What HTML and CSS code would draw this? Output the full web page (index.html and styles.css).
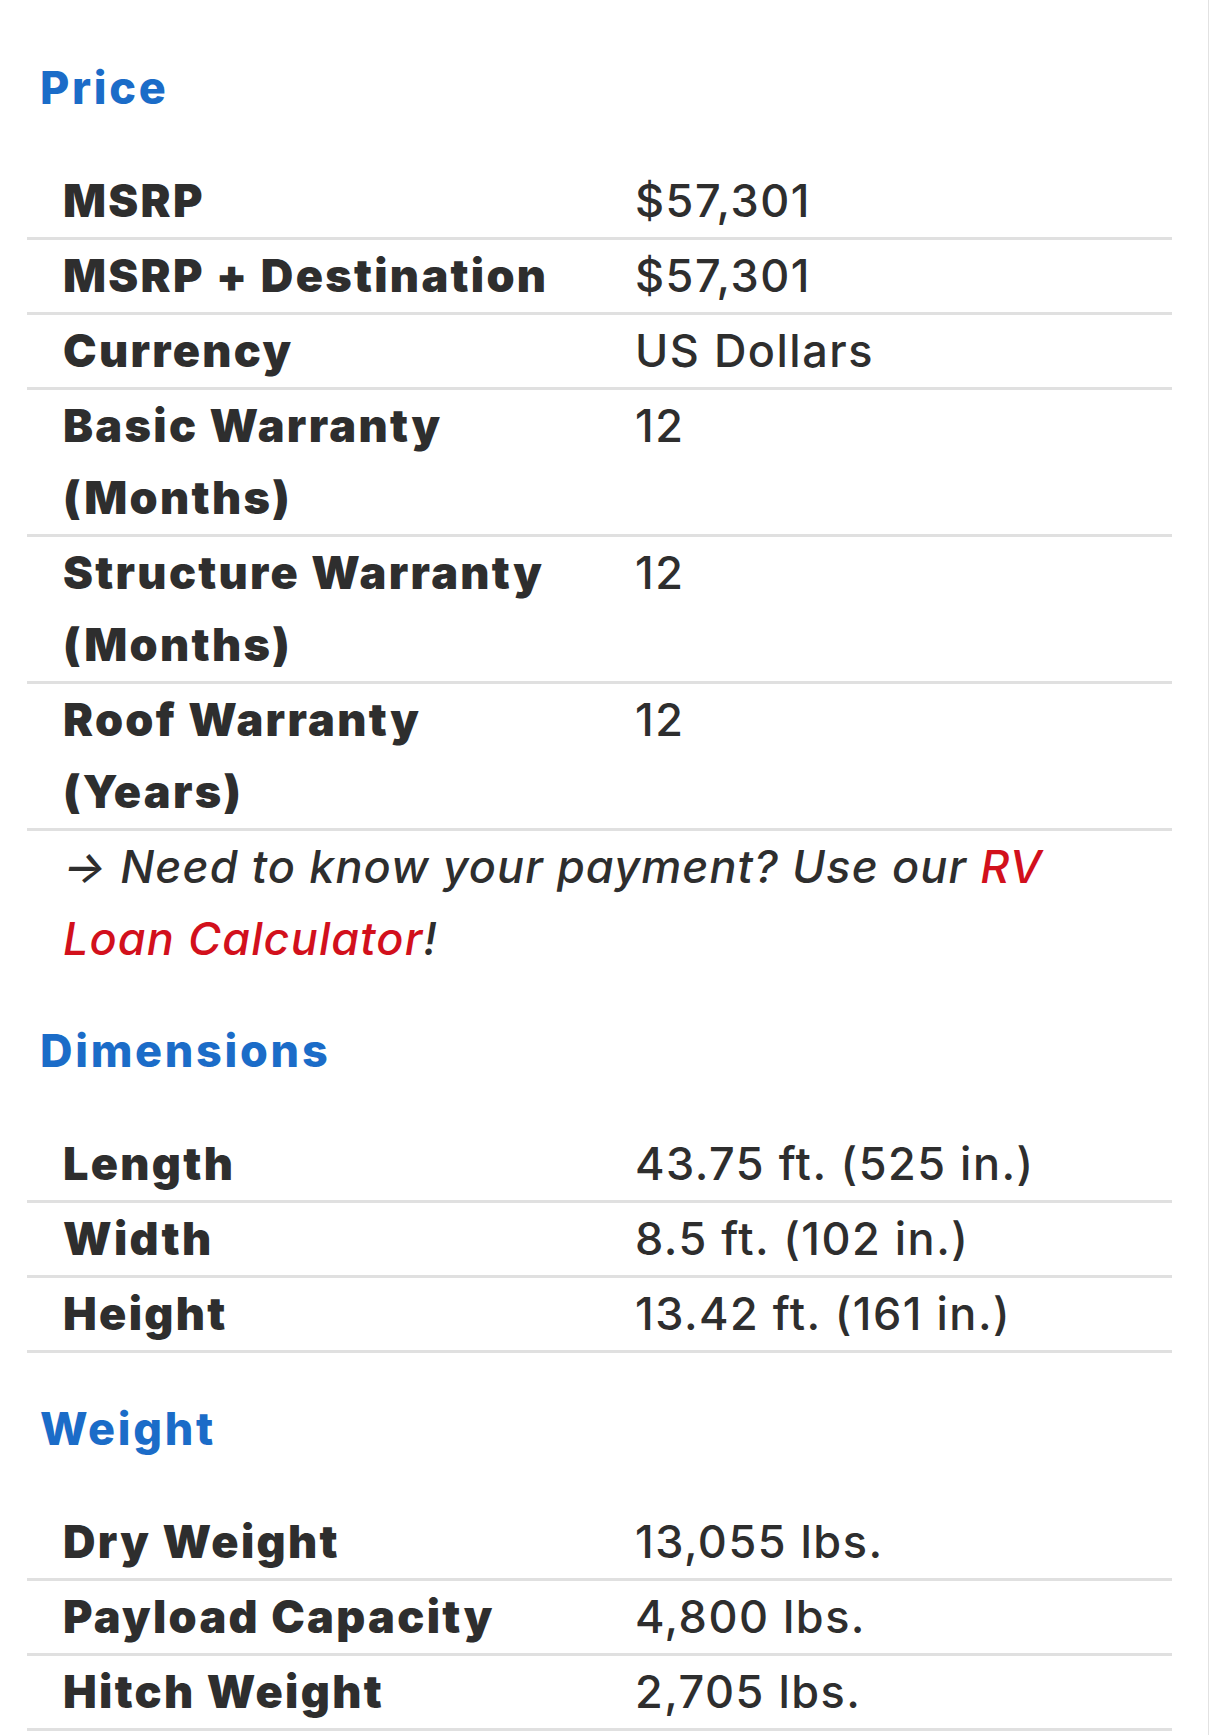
FILE: index.html
```html
<!DOCTYPE html>
<html lang="en">
<head>
<meta charset="utf-8">
<title>Specs</title>
<link rel="stylesheet" href="styles.css">
</head>
<body>
<div class="page">
  <section class="section">
    <h2 class="section-title">Price</h2>
    <table class="spec-table">
      <tr><td class="label">MSRP</td><td class="value">$57,301</td></tr>
      <tr><td class="label">MSRP + Destination</td><td class="value">$57,301</td></tr>
      <tr><td class="label">Currency</td><td class="value">US Dollars</td></tr>
      <tr><td class="label">Basic Warranty (Months)</td><td class="value">12</td></tr>
      <tr><td class="label">Structure Warranty (Months)</td><td class="value">12</td></tr>
      <tr><td class="label">Roof Warranty (Years)</td><td class="value">12</td></tr>
    </table>
    <p class="note">→ Need to know your payment? Use our <a class="note-link" href="#">RV Loan Calculator</a>!</p>
  </section>
  <section class="section">
    <h2 class="section-title">Dimensions</h2>
    <table class="spec-table">
      <tr><td class="label">Length</td><td class="value">43.75 ft. (525 in.)</td></tr>
      <tr><td class="label">Width</td><td class="value">8.5 ft. (102 in.)</td></tr>
      <tr><td class="label">Height</td><td class="value">13.42 ft. (161 in.)</td></tr>
    </table>
  </section>
  <section class="section">
    <h2 class="section-title">Weight</h2>
    <table class="spec-table">
      <tr><td class="label">Dry Weight</td><td class="value">13,055 lbs.</td></tr>
      <tr><td class="label">Payload Capacity</td><td class="value">4,800 lbs.</td></tr>
      <tr><td class="label">Hitch Weight</td><td class="value">2,705 lbs.</td></tr>
    </table>
  </section>
</div>
</body>
</html>
```
FILE: styles.css
```css
html, body {
  margin: 0;
  padding: 0;
  background: #ffffff;
}
body {
  font-family: Inter, "Noto Sans", "Liberation Sans", sans-serif;
  color: #2e2e2e;
}
.page {
  width: 1181px;
  min-height: 1735px;
  padding: 52px 0 0 27px;
  border-right: 1px solid #e2e2e2;
  box-sizing: content-box;
}
.section-title {
  margin: 40px 0 41px;
  padding-left: 13px;
  font-size: 45px;
  line-height: 72px;
  font-weight: 800;
  letter-spacing: 2.7px;
  color: #1b6cc8;
}
.section:first-child .section-title {
  margin-top: 0;
}
.spec-table {
  width: 1145px;
  border-collapse: collapse;
  table-layout: fixed;
}
.spec-table td {
  padding: 0 36px;
  font-size: 45px;
  line-height: 72px;
  vertical-align: top;
  border-bottom: 3px solid #e0e0e0;
}
.label {
  width: 500px;
  font-weight: 900;
  letter-spacing: 2.3px;
}
.value {
  font-weight: 500;
  letter-spacing: 1.5px;
}
.note {
  margin: 0;
  padding: 0 36px;
  width: 1073px;
  font-size: 45px;
  line-height: 72px;
  font-style: italic;
  font-weight: 500;
  letter-spacing: 1.1px;
}
.note-link {
  color: #d2101c;
  text-decoration: none;
}
```
